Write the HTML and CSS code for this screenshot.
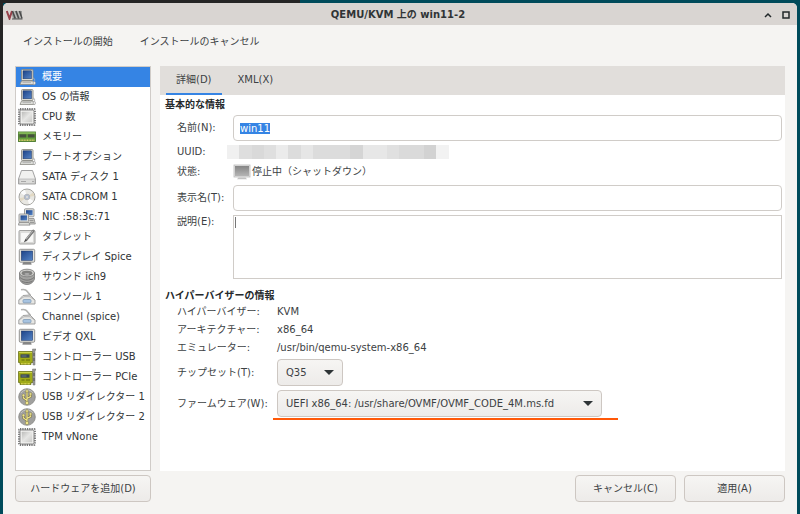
FILE: index.html
```html
<!DOCTYPE html>
<html lang="ja">
<head>
  <meta charset="UTF-8" />
  <meta name="viewport" content="width=device-width, initial-scale=1.0" />
  <title>QEMU/KVM 上の win11-2</title>
  <link rel="stylesheet" href="styles.css">
</head>
<body>
  <!-- shared icons -->
  <svg class="icon-defs" aria-hidden="true">
    <defs>
      <linearGradient id="screen" x1="0" y1="0" x2="1" y2="1">
        <stop offset="0" stop-color="#1d4388" /><stop offset="1" stop-color="#5484c6" />
      </linearGradient>
      <linearGradient id="metal" x1="0" y1="0" x2="1" y2="1">
        <stop offset="0" stop-color="#bcbcba" /><stop offset=".5" stop-color="#e6e6e4" /><stop offset="1" stop-color="#c9c9c7" />
      </linearGradient>
      <linearGradient id="off" x1="0" y1="0" x2="0" y2="1">
        <stop offset="0" stop-color="#858585" /><stop offset="1" stop-color="#b5b5b5" />
      </linearGradient>
    </defs>
    <symbol id="computer" viewBox="0 0 18 18">
      <rect x="3.500" y="1.500" width="11.500" height="11" rx="1" fill="#e4e3d8" stroke="#8b8b85" stroke-width=".9" />
      <rect x="5" y="2.800" width="8.500" height="8" fill="url(#screen)" stroke="#1c3566" stroke-width=".5" />
      <path d="M3.500 13h11.500l1.500 3.500H2z" fill="#dddeda" stroke="#8b8b85" stroke-width=".8" />
      <path d="M4.500 14.600h8.500" stroke="#aaa" stroke-width=".8" />
      <path d="M15 10c1.500 0 2 1.500 1.500 3.500" fill="none" stroke="#aaa" stroke-width=".8" />
      <ellipse cx="16.300" cy="15" rx="1.200" ry="1.600" fill="#eee" stroke="#999" stroke-width=".6" />
    </symbol>
    <symbol id="chip" viewBox="0 0 18 18">
      <rect x="1" y="1" width="16" height="16" rx="1" fill="none" stroke="#777" stroke-width="1.800" stroke-dasharray="1.300 1" />
      <rect x="2" y="2" width="14" height="14" rx="1.500" fill="#f2f2f0" stroke="#777" stroke-width=".9" />
      <rect x="3.800" y="3.800" width="10.400" height="10.400" rx=".5" fill="url(#metal)" />
    </symbol>
    <symbol id="memory" viewBox="0 0 18 18">
      <rect x=".5" y="4" width="17" height="9.500" fill="#65a03d" stroke="#4c7a2e" stroke-width=".9" />
      <path d="M.5 5h17" stroke="#9dcc70" />
      <rect x="1.500" y="6.300" width="6.800" height="3.200" fill="#46503f" />
      <rect x="9.800" y="6.300" width="6.800" height="3.200" fill="#46503f" />
      <path d="M1 12.300h16" stroke="#d9c86c" stroke-width="1.500" stroke-dasharray="1 .6" />
    </symbol>
    <symbol id="disk" viewBox="0 0 18 18">
      <path d="M3.500 2.500h11l3 8.500v5h-17v-5z" fill="#f1f1ef" stroke="#999" stroke-width=".9" stroke-linejoin="round" />
      <path d="M1 11h16v4.500H1z" fill="#dcdcda" stroke="#aaa" stroke-width=".6" />
      <path d="M3 13.500h5" stroke="#999" stroke-width=".8" /><circle cx="15" cy="13.500" r=".7" fill="#888" />
    </symbol>
    <symbol id="cdrom" viewBox="0 0 18 18">
      <circle cx="9" cy="9" r="8" fill="#e8e7e2" stroke="#9a9a96" stroke-width=".9" />
      <path d="M9 9L2.500 5A7.500 7.500 0 0 1 7 1.800zM9 9l6.500 4a7.500 7.500 0 0 1-4.500 3.200z" fill="#fbfbfb" />
      <path d="M9 9L3 13.500A7.500 7.500 0 0 1 1.500 10zM9 9l6-4.500A7.500 7.500 0 0 1 16.500 8z" fill="#e2d9c4" />
      <circle cx="9" cy="9" r="2.800" fill="#b9c6dc" stroke="#aaa" stroke-width=".7" />
      <circle cx="9" cy="9" r="1.200" fill="#fff" stroke="#999" stroke-width=".5" />
    </symbol>
    <symbol id="network" viewBox="0 0 18 18">
      <rect x="6.500" y=".8" width="9.500" height="8" rx=".8" fill="#e4e4df" stroke="#888" stroke-width=".8" />
      <rect x="8" y="2.200" width="6.600" height="5" fill="url(#screen)" />
      <path d="M11 10.500h5l1.300 5.500H11" fill="#d4d4cf" stroke="#888" stroke-width=".8" />
      <path d="M11.500 12.300h4M12 14.300h4" stroke="#777" stroke-width=".8" />
      <rect x="1" y="6" width="9.500" height="8" rx=".8" fill="#e4e4df" stroke="#888" stroke-width=".8" />
      <rect x="2.500" y="7.400" width="6.600" height="5" fill="url(#screen)" />
      <path d="M1 14.500h10l1 2.600H.5z" fill="#dddeda" stroke="#888" stroke-width=".8" />
    </symbol>
    <symbol id="tablet" viewBox="0 0 18 18">
      <rect x="1" y="2.500" width="16" height="13.500" rx="1" fill="#dededb" stroke="#999" stroke-width=".9" />
      <rect x="2.800" y="4.300" width="12.400" height="9.900" fill="#f8f8f7" stroke="#ccc" stroke-width=".5" />
      <path d="M15.300 3L8.300 11.800" stroke="#777" stroke-width="2.600" stroke-linecap="round" />
      <path d="M15 2.800L8 11.300" stroke="#bbb" stroke-width=".9" />
      <path d="M7.300 11.300l-1.500 3.200 3-1.700z" fill="#444" />
    </symbol>
    <symbol id="display" viewBox="0 0 18 18">
      <rect x="1.300" y="1.300" width="15.400" height="12.900" rx="1.200" fill="#e4e3dc" stroke="#888" stroke-width=".9" />
      <rect x="3.300" y="3" width="11.400" height="9.400" fill="url(#screen)" stroke="#1c3566" stroke-width=".5" />
      <path d="M5.500 14.500h7l.8 1.800H4.700z" fill="#888" stroke="#777" stroke-width=".6" />
    </symbol>
    <symbol id="sound" viewBox="0 0 18 18">
      <path d="M1.500 5v6c1 3 3.500 5.500 7.500 5.500s6.500-2.500 7.500-5.500V5z" fill="#a2a2a0" stroke="#777" stroke-width=".8" />
      <ellipse cx="9" cy="5" rx="7.500" ry="3.800" fill="#cfcfcc" stroke="#777" stroke-width=".8" />
      <ellipse cx="9" cy="5.200" rx="5.300" ry="2.400" fill="#828280" />
      <ellipse cx="9" cy="6" rx="2.500" ry="1.100" fill="#aaa" />
      <path d="M2 9.500c4 3.500 10 3.500 14 0M3.500 13c3 2 8 2 11 0" fill="none" stroke="#6f6f6f" stroke-width=".9" />
    </symbol>
    <symbol id="serial" viewBox="0 0 18 18">
      <path d="M3 1.800c6-1.500 6 2.500 9.500 5.500" fill="none" stroke="#b2b2b0" stroke-width="1.600" />
      <path d="M5 7.500l7-.5 5 5v4H.8v-4z" fill="#e6e6e3" stroke="#999" stroke-width=".9" stroke-linejoin="round" />
      <path d="M1 12l5-3.300h6l4.500 3.300" fill="none" stroke="#aaa" stroke-width=".8" />
      <rect x="5" y="11.500" width="8" height="3.300" rx="1" fill="#a7c3e0" stroke="#7f9ab8" stroke-width=".8" />
    </symbol>
    <symbol id="card" viewBox="0 0 18 18">
      <path d="M.5 3.500H15v11h-2v2H2v-2H.5z" fill="#a0aa18" stroke="#6d751a" stroke-width=".8" />
      <path d="M1 4.500h13" stroke="#c9d14c" />
      <rect x="2.500" y="6.300" width="9" height="3.400" fill="#3c4a50" />
      <path d="M3.500 8h5" stroke="#8294a0" stroke-width=".7" />
      <path d="M3.500 12h3M8 12h4" stroke="#626a10" />
      <path d="M3 15.700h9" stroke="#ddd75c" stroke-width="1.500" stroke-dasharray=".8 .6" />
      <path d="M14.500 1H18v1.200h-1V17h-2z" fill="#9a9a98" stroke="#777" stroke-width=".5" />
      <path d="M16 5v3M16 10v3" stroke="#555" stroke-width="1.100" />
    </symbol>
    <symbol id="usb" viewBox="0 0 18 18">
      <circle cx="9" cy="9" r="8.300" fill="#a0a09e" stroke="#858583" stroke-width=".8" />
      <path d="M3 5a7.300 7.300 0 0 1 12 0" fill="none" stroke="#c4c4c4" />
      <g fill="none" stroke="#6b6640" stroke-width="2.200"><path d="M9 3v12M9 12.500L5.500 10V7.500M9 10.500l3.500-2V6" /></g>
      <g fill="none" stroke="#f1e68a" stroke-width="1.300"><path d="M9 3v12M9 12.500L5.500 10V7.500M9 10.500l3.500-2V6" /></g>
      <g fill="#f1e68a" stroke="#6b6640" stroke-width=".4">
        <path d="M9 1l2 3H7z" /><circle cx="9" cy="15" r="1.700" />
        <circle cx="5.500" cy="7.300" r="1.300" /><path d="M11.300 4.800h2.400v2.400h-2.400z" />
      </g>
    </symbol>
    <symbol id="shutoff" viewBox="0 0 18 18">
      <rect x="1" y="2" width="16" height="12" fill="#e2e2e2" stroke="#bbb" stroke-width=".8" />
      <rect x="2" y="3" width="14" height="10" fill="url(#off)" />
      <path d="M5.500 14.500h7l1.500 1.800H4z" fill="#c2c2c2" />
    </symbol>
  </svg>

  <div class="window">
    <header class="titlebar">
      <svg class="app-logo" viewBox="0 0 17 10" aria-hidden="true">
        <path d="M5 1h11v8H7z" fill="#9b9b99" />
        <path d="M.8 1l2.700 7.500L6 1" fill="none" stroke="#96404a" stroke-width="2" />
        <path d="M6.500 1l2.700 7.500M10 1l2.700 7.500M13.500 1L16 8.500" fill="none" stroke="#4b4b4b" stroke-width="1.500" />
        <path d="M8 1l3 7.500M11.700 1l3 7.500" fill="none" stroke="#c8c8c6" stroke-width=".8" />
        <path d="M6 9h10.500" stroke="#555" />
      </svg>
      <h1>QEMU/KVM 上の win11-2</h1>
      <div class="window-controls">
        <button type="button" aria-label="最小化"><svg viewBox="0 0 8 8"><path d="M1 6l3-3 3 3" /></svg></button>
        <button type="button" aria-label="最大化"><svg viewBox="0 0 8 8"><path d="M1 1h6v6H1z" /></svg></button>
      </div>
    </header>

    <nav class="toolbar">
      <button type="button">インストールの開始</button>
      <button type="button">インストールのキャンセル</button>
    </nav>

    <main class="content">
      <ul class="hardware">
        <li><button type="button" class="active"><svg><use href="#computer" /></svg>概要</button></li>
        <li><button type="button"><svg><use href="#computer" /></svg>OS の情報</button></li>
        <li><button type="button"><svg><use href="#chip" /></svg>CPU 数</button></li>
        <li><button type="button"><svg><use href="#memory" /></svg>メモリー</button></li>
        <li><button type="button"><svg><use href="#computer" /></svg>ブートオプション</button></li>
        <li><button type="button"><svg><use href="#disk" /></svg>SATA ディスク 1</button></li>
        <li><button type="button"><svg><use href="#cdrom" /></svg>SATA CDROM 1</button></li>
        <li><button type="button"><svg><use href="#network" /></svg>NIC :58:3c:71</button></li>
        <li><button type="button"><svg><use href="#tablet" /></svg>タブレット</button></li>
        <li><button type="button"><svg><use href="#display" /></svg>ディスプレイ Spice</button></li>
        <li><button type="button"><svg><use href="#sound" /></svg>サウンド ich9</button></li>
        <li><button type="button"><svg><use href="#serial" /></svg>コンソール 1</button></li>
        <li><button type="button"><svg><use href="#serial" /></svg>Channel (spice)</button></li>
        <li><button type="button"><svg><use href="#display" /></svg>ビデオ QXL</button></li>
        <li><button type="button"><svg><use href="#card" /></svg>コントローラー USB</button></li>
        <li><button type="button"><svg><use href="#card" /></svg>コントローラー PCIe</button></li>
        <li><button type="button"><svg><use href="#usb" /></svg>USB リダイレクター 1</button></li>
        <li><button type="button"><svg><use href="#usb" /></svg>USB リダイレクター 2</button></li>
        <li><button type="button"><svg><use href="#chip" /></svg>TPM vNone</button></li>
      </ul>

      <section class="details">
        <div class="tabs">
          <button type="button" class="active">詳細(D)</button>
          <button type="button">XML(X)</button>
        </div>

        <h2>基本的な情報</h2>
        <div class="form basic">
          <label for="name">名前(N):</label>
          <input type="text" id="name" value="win11" />
          <span>UUID:</span>
          <div class="uuid"></div>
          <span>状態:</span>
          <div class="state"><svg><use href="#shutoff" /></svg>停止中（シャットダウン）</div>
          <label for="title">表示名(T):</label>
          <input type="text" id="title" />
          <label for="description" class="top">説明(E):</label>
          <textarea id="description"></textarea>
        </div>

        <h2>ハイパーバイザーの情報</h2>
        <div class="form hypervisor">
          <span>ハイパーバイザー:</span>
          <span>KVM</span>
          <span>アーキテクチャー:</span>
          <span>x86_64</span>
          <span>エミュレーター:</span>
          <span>/usr/bin/qemu-system-x86_64</span>
          <label for="chipset">チップセット(T):</label>
          <div class="combo chipset">
            <select id="chipset"><option>Q35</option></select>
          </div>
          <label for="firmware">ファームウェア(W):</label>
          <div class="combo firmware">
            <select id="firmware"><option>UEFI x86_64: /usr/share/OVMF/OVMF_CODE_4M.ms.fd</option></select>
          </div>
        </div>
      </section>
    </main>

    <footer class="actions">
      <button type="button" class="add">ハードウェアを追加(D)</button>
      <button type="button">キャンセル(C)</button>
      <button type="button">適用(A)</button>
    </footer>
  </div>

  <script>
    document.getElementById("name").select();
  </script>
</body>
</html>
```
FILE: styles.css
```css
* {
  box-sizing: border-box;
}
body {
  margin: 0;
  padding: 3px 3px 0;
  min-height: 100vh;
  display: flex;
  background: linear-gradient(#252525, #252525) 0 0 / 3px 370px no-repeat,
    linear-gradient(#252525, #252525) 0 0 / 300px 3px no-repeat,
    #004b5b;
  font-family: "DejaVu Sans", "Noto Sans CJK JP", sans-serif;
  font-size: 10px;
  line-height: 14px;
  color: #3c4143;
}
button, input, textarea, select {
  font: inherit;
  color: inherit;
  margin: 0;
}
.icon-defs {
  position: absolute;
  width: 0;
  height: 0;
}
.window {
  flex: 1;
  display: flex;
  flex-direction: column;
  background: #f5f4f2;
  border-radius: 5px 5px 0 0;
}
.titlebar {
  display: grid;
  grid-template-columns: 1fr auto 1fr;
  align-items: center;
  height: 22px;
  padding: 1px 7px 0 3px;
  background: #d9d5d2;
  border-radius: 5px 5px 0 0;
}
.titlebar h1 {
  margin: 0;
  font-size: 10px;
  color: #303436;
}
.app-logo {
  width: 17px;
  height: 10px;
}
.window-controls {
  display: flex;
  justify-content: flex-end;
  gap: 10px;
}
.window-controls button {
  display: flex;
  padding: 0;
  border: none;
  background: none;
}
.window-controls svg {
  width: 8px;
  height: 8px;
  fill: none;
  stroke: #22282a;
  stroke-width: 1.5;
}
.toolbar {
  display: flex;
  align-items: center;
  gap: 27px;
  height: 41px;
  padding: 0 20px 8px;
}
.toolbar button {
  padding: 0;
  border: none;
  background: none;
}
.content {
  flex: 1;
  display: flex;
  gap: 9px;
  padding: 0 12px;
}
.hardware {
  width: 136px;
  margin: 0;
  padding: 0;
  list-style: none;
  background: #fff;
  border: 1px solid #d0ccc8;
}
.hardware button {
  display: flex;
  align-items: center;
  gap: 6px;
  width: 100%;
  height: 20px;
  padding: 0 2px;
  border: none;
  background: none;
  color: #303436;
  white-space: nowrap;
}
.hardware .active {
  background: #3584e4;
  color: #fff;
}
.hardware svg, .state svg {
  width: 18px;
  height: 18px;
  flex: none;
}
.details {
  flex: 1;
  min-width: 0;
  background: #fff;
}
.tabs {
  display: flex;
  gap: 6px;
  height: 29px;
  padding: 0 6px;
  background: #e1dedb;
}
.tabs button {
  padding: 1px 10px 0;
  border: none;
  border-bottom: 2px solid transparent;
  background: none;
}
.tabs .active {
  border-color: #3584e4;
}
.details h2 {
  margin: 3px 0 3px 5px;
  font-size: 10px;
  line-height: 14px;
  color: #25292b;
}
.form {
  display: grid;
  gap: 4px 0;
  align-items: center;
  padding: 0 3px 0 17px;
}
.basic {
  grid-template-columns: 56px 1fr;
}
.details .form + h2 {
  margin: 10px 0 2px 5px;
}
.hypervisor {
  grid-template-columns: 100px 1fr;
}
.form label, .form span {
  white-space: nowrap;
}
.form .top {
  align-self: start;
}
.form input {
  height: 26px;
  padding: 0 6px;
  border: 1px solid #d0ccc8;
  border-radius: 4px;
  background: #fff;
  outline: none;
}
.form input::selection {
  background: #3584e4;
  color: #fff;
}
.form textarea {
  height: 64px;
  padding: 1px 2px;
  border: 1px solid #d0ccc8;
  background: linear-gradient(#777, #777) 1px 1px / 1px 11px no-repeat #fff;
  resize: none;
  outline: none;
}
.uuid {
  width: 222px;
  height: 14px;
  margin-left: -6px;
  background: linear-gradient(90deg, #f0f0f0 0 12px, #dedede 12px 25px, #d9d9d9 25px 37px,
    #dfdfdf 37px 49px, #ebebeb 49px 61px, #dcdcdc 61px 74px, #e6e6e6 74px 86px, #dcdcdc 86px 123px,
    #d5d5d5 123px 136px, #e7e7e7 136px 160px, #e0e0e0 160px 172px, #dadada 172px 197px,
    #d2d2d2 197px 209px, #f2f2f2 209px);
}
.state {
  display: flex;
  align-items: center;
  gap: 1px;
}
.combo {
  position: relative;
  height: 27px;
}
.combo select {
  appearance: none;
  width: 100%;
  height: 100%;
  padding: 0 8px;
  border: 1px solid #cdc7c2;
  border-radius: 4px;
  background: linear-gradient(#f6f5f3, #edebe9);
}
.combo::after {
  content: "";
  position: absolute;
  top: 11px;
  right: 9px;
  border: 5px solid transparent;
  border-top-color: #2e3436;
  border-bottom: none;
  pointer-events: none;
}
.chipset {
  width: 66px;
}
.firmware {
  width: 325px;
}
/* marker line under the firmware choice */
.firmware::before {
  content: "";
  position: absolute;
  top: 28px;
  left: -4px;
  right: -16px;
  height: 2px;
  background: #ff5808;
}
.actions {
  display: flex;
  justify-content: flex-end;
  gap: 8px;
  padding: 4px 12px 12px;
}
.actions button {
  width: 101px;
  height: 27px;
  padding: 0;
  border: 1px solid #cdc7c2;
  border-radius: 4px;
  background: linear-gradient(#f6f5f3, #edebe9);
}
.actions .add {
  width: 136px;
  margin-right: auto;
}
```
